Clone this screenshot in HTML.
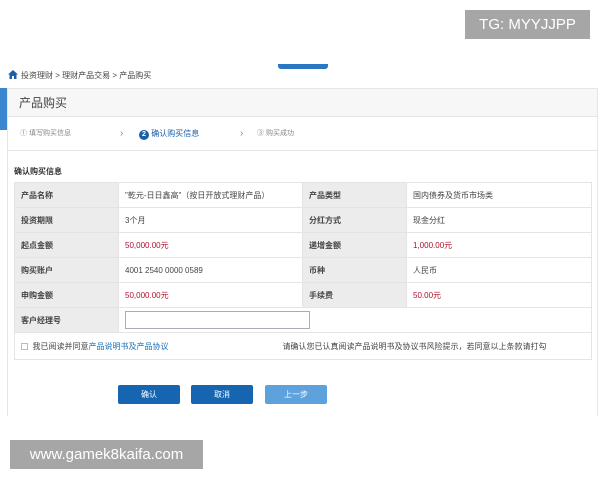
<!DOCTYPE html>
<html><head><meta charset="utf-8"><style>
*{margin:0;padding:0;box-sizing:border-box}
body{width:600px;height:480px;background:#fff;position:relative;overflow:hidden;font-family:"Liberation Sans","Noto Sans CJK SC",sans-serif;color:#333}
.a{position:absolute}
.wm{background:#a6a6a6;color:#fff;font-size:15px;line-height:29px;text-align:center}
table{border-collapse:collapse;position:absolute;left:14px;top:182px;width:578px;font-size:8px}
td{border:1px solid #e4e4e4;height:25px;padding-left:6px;color:#444}
td.l{background:#ececec;font-weight:bold;width:104px}
td.v{width:184px}
.r{color:#b0102a}
.btn{position:absolute;top:385px;width:62px;height:19px;border-radius:2px;background:#1565b0;color:#fff;font-size:8px;text-align:center;line-height:19px}
</style></head><body>
<div class="a wm" style="left:465px;top:10px;width:125px">TG: MYYJJPP</div>
<div class="a" style="left:278px;top:64px;width:50px;height:5px;background:#2b77c2;border-radius:0 0 3px 3px"></div>
<svg class="a" style="left:8px;top:70px" width="10" height="9" viewBox="0 0 10 9"><path d="M5 0L0 4.5h1.5V9h2.5V6h2v3h2.5V4.5H10z" fill="#1a5fa8"/></svg>
<div class="a" style="left:21px;top:70px;font-size:8px;color:#444">投资理财 &gt; 理财产品交易 &gt; 产品购买</div>
<div class="a" style="left:7px;top:88px;width:591px;height:328px;border:1px solid #e6e6e6;border-bottom:none"></div>
<div class="a" style="left:0;top:88px;width:7px;height:42px;background:#3b87cf"></div>
<div class="a" style="left:8px;top:89px;width:589px;height:28px;background:#f7f7f7;border-bottom:1px solid #e6e6e6;font-size:12px;line-height:28px;padding-left:11px;color:#444">产品购买</div>
<div class="a" style="left:8px;top:117px;width:589px;height:34px;border-bottom:1px solid #e6e6e6;font-size:7px;line-height:34px;color:#888">
<span class="a" style="left:12px">① 填写购买信息</span>
<span class="a" style="left:112px;font-size:10px">›</span>
<span class="a" style="left:131px;color:#1a5fa8;font-size:8px"><b style="display:inline-block;width:10px;height:10px;border-radius:5px;background:#1a5fa8;color:#fff;line-height:10px;text-align:center;font-size:7px">2</b> 确认购买信息</span>
<span class="a" style="left:232px;font-size:10px">›</span>
<span class="a" style="left:249px">③ 购买成功</span>
</div>
<div class="a" style="left:14px;top:166px;font-size:8px;font-weight:bold;color:#333">确认购买信息</div>
<table>
<tr><td class="l">产品名称</td><td class="v">"乾元-日日鑫高"（按日开放式理财产品）</td><td class="l">产品类型</td><td>国内债券及货币市场类</td></tr>
<tr><td class="l">投资期限</td><td class="v">3个月</td><td class="l">分红方式</td><td>现金分红</td></tr>
<tr><td class="l">起点金额</td><td class="v r">50,000.00元</td><td class="l">递增金额</td><td class="r">1,000.00元</td></tr>
<tr><td class="l">购买账户</td><td class="v">4001 2540 0000 0589</td><td class="l">币种</td><td>人民币</td></tr>
<tr><td class="l">申购金额</td><td class="v r">50,000.00元</td><td class="l">手续费</td><td class="r">50.00元</td></tr>
<tr><td class="l">客户经理号</td><td colspan="3" style="padding-left:6px"><div style="width:185px;height:18px;border:1px solid #aab"></div></td></tr>
<tr><td colspan="4" style="height:27px;font-size:8px"><span style="display:inline-block;width:7px;height:7px;border:1px solid #bbb;vertical-align:middle"></span>&nbsp; 我已阅读并同意<span style="color:#1a6fb8">产品说明书及产品协议</span><span style="position:absolute;left:268px">请确认您已认真阅读产品说明书及协议书风险提示，若同意以上条款请打勾</span></td></tr>
</table>
<div class="btn" style="left:118px">确认</div>
<div class="btn" style="left:191px">取消</div>
<div class="btn" style="left:265px;background:#5da2dc">上一步</div>
<div class="a wm" style="left:10px;top:440px;width:193px;font-size:15px">www.gamek8kaifa.com</div>
</body></html>
